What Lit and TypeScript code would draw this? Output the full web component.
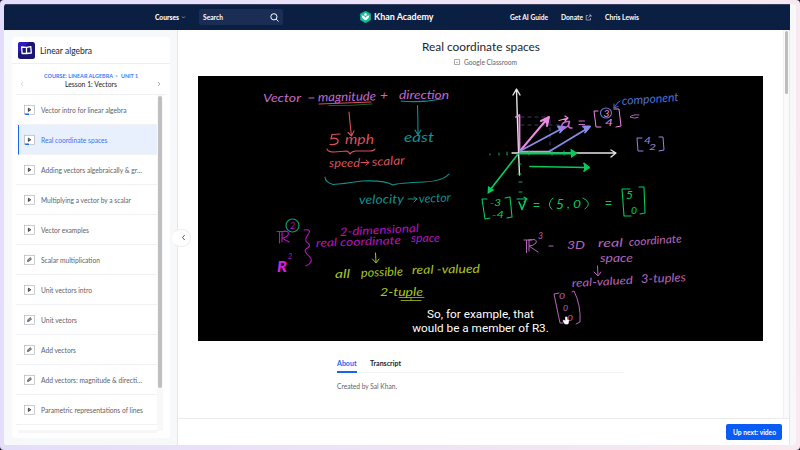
import { LitElement, html, css, svg, nothing } from "lit";
import { customElement } from "lit/decorators.js";
import { classMap } from "lit/directives/class-map.js";

type Kind = "video" | "exercise";
interface Lesson { title: string; w: number; kind: Kind; started?: boolean; active?: boolean; }

const LESSONS: Lesson[] = [
  { title: "Vector intro for linear algebra", w: 85.5, kind: "video", started: true },
  { title: "Real coordinate spaces", w: 66.5, kind: "video", started: true, active: true },
  { title: "Adding vectors algebraically & gr…", w: 101, kind: "video" },
  { title: "Multiplying a vector by a scalar", w: 90, kind: "video" },
  { title: "Vector examples", w: 48, kind: "video" },
  { title: "Scalar multiplication", w: 59, kind: "exercise" },
  { title: "Unit vectors intro", w: 51, kind: "video" },
  { title: "Unit vectors", w: 36, kind: "exercise" },
  { title: "Add vectors", w: 35, kind: "exercise" },
  { title: "Add vectors: magnitude & directi…", w: 101, kind: "exercise" },
  { title: "Parametric representations of lines", w: 102, kind: "video" },
];

// One line of UI text whose advance is fixed, with the baseline at 9 in a 12px box.
const line = (t: string, w: number, size: number, cls = "") => html`
  <svg class="line ${cls}" width=${w} height="12" viewBox="0 0 ${w} 12">
    <text x="0" y="9" font-size=${size} textLength=${w} lengthAdjust="spacingAndGlyphs">${t}</text>
  </svg>`;

// Chalk text on the board: x, baseline, width, size, colour, angle.
const ink = (t: string, x: number, y: number, w: number, s: number, c: string, a = 0, weight = 400) => svg`
  <text x=${x} y=${y} font-size=${s} fill=${c} font-weight=${weight} textLength=${w}
    lengthAdjust="spacingAndGlyphs" transform="rotate(${a} ${x} ${y})">${t}</text>`;
const stroke = (d: string, c: string, w = 1, dash = "") => svg`
  <path d=${d} stroke=${c} stroke-width=${w} stroke-dasharray=${dash || nothing} fill="none"
    stroke-linecap="round" stroke-linejoin="round"></path>`;

@customElement("lesson-icon")
class LessonIcon extends LitElement {
  static properties = { kind: {}, started: { type: Boolean } };
  declare kind: Kind;
  declare started: boolean;
  static styles = css`:host { display: block; width: 11px; height: 12px; } svg { display: block; }`;
  render() {
    return html`<svg width="11" height="12" viewBox="0 0 11 12">
      <rect x=".5" y="1.300" width="9.900" height="9" fill="#fff" stroke="#b4b6ba" stroke-width=".7"/>
      ${this.kind === "video"
        ? svg`<path d="M4.400 4.200V7.400L6.800 5.800Z" fill="#aaa" stroke="#333" stroke-width=".9" stroke-linejoin="round"/>`
        : svg`<path d="M3.500 7.500 4 5.700 6.100 3.600 7.500 4.900 5.400 7Z" fill="#999" stroke="#444" stroke-width=".8" stroke-linejoin="round"/>`}
      ${this.started ? svg`<path d="M.600 9.600H5V11H1.600Z" fill="#1865f2"/>` : nothing}
    </svg>`;
  }
}

@customElement("chalk-board")
class ChalkBoard extends LitElement {
  static styles = css`
    :host { display: block; position: relative; width: 565px; height: 265px; background: #000; overflow: hidden; }
    svg { display: block; font-family: Lato, sans-serif; font-style: italic; }
    .caption { position: absolute; left: 212.500px; top: 232.500px; width: 140px; text-align: center; color: #fff;
      font: 400 11.75px/13.6px Roboto, sans-serif; white-space: nowrap; }
    .caption div { height: 13.6px; }
  `;
  render() {
    const pk = "#c56ad0", rd = "#d9505a", te = "#12908f", gr = "#07c95e", vi = "#8a8ae8", mg = "#b414bd", ye = "#a9c522", lp = "#b765bd", bl = "#4d6fd0", wh = "#e6e6e6", rose = "#ea8ae0";
    return html`<svg width="565" height="265" viewBox="198 76 565 265">
      ${ink("Vector", 263, 102, 38, 12, pk)}${stroke("M309 98h5", pk)}
      ${ink("magnitude", 318, 101.5, 58, 12.5, pk, -1)}${ink("+", 380, 98.5, 8, 11, pk)}${ink("direction", 399, 99, 50, 12, pk)}
      ${stroke("M319 104Q345 103 371 102", rd, 1.1)}${stroke("M329 105.5Q350 106 372 104", "#11833b", .8)}
      ${stroke("M401 101Q420 103 442 99", te, 1.1)}
      ${stroke("M349 112Q350 124 351.500 136M348 132.500L351.500 136 354 131", rd, 1.1)}
      ${stroke("M417.500 105.500Q418 120 418 134M415 130L418 135 421 130", te, 1.1)}
      ${stroke("M340 134L332 134.500 331 139Q336 137 338 140Q339 145 330 144.500", rd, 1.2)}${ink("mph", 345, 143.500, 29, 14, rd)}${ink("east", 404, 142, 30, 13, te)}
      ${stroke("M327 149Q328 152 334 152L347 151Q349 152 350 154Q352 151 356 151L370 151Q374 151 375 149", rd, 1.1)}
      ${ink("speed", 329, 167, 31, 12, rd)}${stroke("M361 162.500h8M366 160l3 2.500-3 2.500", rd)}${ink("scalar", 372, 166, 33, 12, rd, -3)}
      ${stroke("M325 177Q325 182 333 184.500Q342 184 362 181Q385 180 393 185Q398 183 424 182Q443 181 449 174", te, 1.1)}
      ${ink("velocity", 359, 204, 45, 12.5, te, -1)}${stroke("M408 199h9M414 197l3 2-3 3", te)}${ink("vector", 419, 203, 32, 12, te, -3)}

      ${stroke("M519.500 175Q518 140 516.500 90M513 95L516.500 89 520 95", wh, 1.4)}
      ${stroke("M512 153H615M611 150L616 153 611 157", wh, 1.3)}
      ${stroke("M519.500 151V116M516 117L519.500 115", rose, 1.8)}
      ${stroke("M521 117H546M521 125H563M550 121V151", "#53538f", .7, "3 4")}
      ${stroke("M521 151.500H550", rose, 1.5)}
      ${stroke("M520 151L547 119M541 121L549 117 547 126", rose, 2)}
      ${stroke("M520 151L563 128M558 126.500L565 127 560 132.500", vi, 1.8)}
      ${stroke("M550 151L588 128M583 126.500L590 126.500 585 132.500", vi, 1.8)}
      <path d="M542.500 119.500 549.500 116.500 547.500 125.500Z" fill=${rose}/>
      <path d="M557.500 127 565.500 127 560.500 132.500ZM583 127 591 126.500 586 132.500Z" fill=${vi}/>
      ${stroke("M520 153.300H575", gr, 2.2)}
      ${stroke("M530 166.500L587 167.500M584 163.500L589 167.500 584 171", gr, 1.7)}
      ${stroke("M518 154L490 190", gr, 1.7)}
      <path d="M570.500 148.500 578 153.300 571 158ZM488 186 487.500 194 494.500 190ZM584 163.500 590 167.500 584 171Z" fill=${gr}/>
      ${stroke("M490 154v1M499 153v2M507 152v3M529 151v4M552 151v4M564 151v4M518 164h3M518 174h3M519 182h3M519 192h3", gr, .9)}
      ${stroke("M569 121.500Q562 121 561.500 127Q562 131 568 126L569.500 121.500Q567 129 572 128", pk, 1.5)}${stroke("M559 120.500L568 118M565 116L568 118 565 121", rose, 1.2)}
      ${stroke("M579 121h5.500M579 124.500h5.500", pk, 1)}${ink("3", 603.500, 117, 6, 9, rose)}${ink("4", 605, 125.500, 8, 9, rose)}
      ${stroke("M598 111L594 111 596 127 601 127M614 109L619 109 621 126 616 127", rose, 1)}
      ${stroke("M600.500 113a5.500 5 0 1 1 11 0a5.500 5 0 1 1 -11 0", "#5d83d6", 1.1)}
      ${stroke("M620 101Q617 102 614 108M614 104V108L618 106.500", bl, 1)}
      ${ink("component", 622, 105, 57, 12, bl, -4)}
      ${stroke("M639 115Q633 114 630 117Q635 119 638 117.500", pk, .9)}
      ${stroke("M642 138L637 138 638 151 643 151M659 137L663 137 664 150 659 151", vi, 1)}
      ${ink("4", 644, 143.500, 7, 9, vi)}${ink("2", 649, 150, 7, 8, vi)}
      ${stroke("M487 199L482 199 485 219 490 218M505 198L510 197 512 217 507 218", gr, 1.1)}
      ${ink("-3", 490, 206, 11, 9.5, gr)}${ink("-4", 492, 218, 12, 9.5, gr)}
      ${stroke("M519 202Q521 206 522 209.500L525.500 201", gr, 1.6)}${stroke("M517 199H527M524 197L527 199 524 202", gr, 1.1)}
      ${stroke("M534 203.500h5M534 206.500h5M606 201.500h5M606 204.500h5", gr, 1)}
      ${stroke("M553 198Q546 204 552 209.500M583 198Q593 203 585 209", gr, 1)}
      ${ink("5", 556, 208.500, 8, 13, gr)}${ink(",", 567, 208, 3, 12, gr)}${ink("0", 573, 208, 8, 11, gr)}
      ${stroke("M630 189L622 189 624 216 631 216M639 187L644 187 645 213 640 214", gr, 1.1)}
      ${ink("5", 626, 198.5, 7, 12, gr)}${ink("0", 631, 213.5, 6, 9, gr)}

      ${stroke("M277 231.500H285M279.500 232V243M282 232V242M282 231.500Q290 230 288 235Q286 238 282 238L289 242", mg, 1.1)}${ink("2", 290, 229, 5, 9, mg)}
      ${stroke("M286 225.500a6.500 6.500 0 1 1 13 0a6.500 6.500 0 1 1 -13 0", "#149b6c", 1.2)}
      ${ink("R", 277, 272, 10, 15, "#d322dd", 0, 900)}${ink("2", 288, 259, 4, 8, mg)}
      ${stroke("M304 230Q311 229 309 233Q303 241 308 243Q312 246 306 249Q303 251 310 257Q314 262 306 266", mg, 1.1)}
      ${ink("2-dimensional", 340, 236, 79, 11.500, mg, -3)}
      ${ink("real coordinate", 316, 247, 85, 11.500, mg, -2)}${ink("space", 411, 242, 29, 11.500, mg)}
      ${stroke("M375.500 253L376 262M372.500 259L376 263 379 259", ye, 1)}
      ${ink("all", 335, 278, 15, 12, ye)}${ink("possible", 361, 277, 42, 12, ye, -2)}${ink("real -valued", 412, 274, 68, 12, ye, -1)}
      ${ink("2-tuple", 380, 296, 43, 11.500, ye)}${stroke("M399 297.500H424M401 300.500H421M411 298v2", ye, .8)}

      ${stroke("M524 240H532M526.500 240.500V252.500M529 240V251M529 240Q538 238 536 243Q533 246 529 246L538 252", lp, 1)}${ink("3", 538, 239, 5, 9, lp)}${stroke("M549 246h4", lp)}
      ${ink("3D", 567, 249, 18, 12, lp)}${ink("real", 598, 247, 25, 11.5, lp, -1)}${ink("coordinate", 629, 246, 53, 11, lp, -4)}
      ${ink("space", 600, 262, 33, 11.500, lp)}${stroke("M597.500 266L598 275M594 272L598 276 601 272", lp)}
      ${ink("real-valued", 572, 287, 61, 11, lp, -3)}${ink("3-tuples", 641, 283, 45, 12, lp, -2)}
      ${stroke("M559 293L554 294 560 323 563 323M572 292L574 291Q581 305 580 322L576 324", lp, 1)}
      ${ink("0", 559, 299, 6, 7, lp)}${ink("0", 563, 311, 5, 7, lp)}${ink("0", 567, 321, 6, 7, lp)}
      <path d="M565.500 317V321L563.500 320 563 321 565 324H568L569 320.500 567 319.500V317Z" fill="#fff" stroke="#fff" stroke-width=".6"/>
    </svg>
    <div class="caption"><div>So, for example, that</div><div>would be a member of R3.</div></div>`;
  }
}

@customElement("app-root")
class AppRoot extends LitElement {
  static styles = css`
    :host { display: block; width: 800px; height: 450px; overflow: hidden; background: #201d30; font-family: Lato, sans-serif; color: #21242c; }
    * { box-sizing: border-box; }
    .frame { height: 450px; padding: 4px 4px 5px; border-radius: 4px; background: linear-gradient(100deg, #e3dcfb 0%, #ece3f8 45%, #fae9ee 100%); }
    .window { height: 441px; border-radius: 3px; background: #f8f8fa; overflow: hidden; }
    .page { width: 785.500px; height: 441px; display: flex; flex-direction: column; background: #fff; border-right: 1px solid #e7e7eb; }
    .line { display: block; overflow: visible; fill: currentColor; flex: none; }
    .bold { font-weight: 700; } .black { font-weight: 900; }
    .nav { height: 25.700px; flex: none; background: #0b1f42; color: #fff; display: grid; grid-template-columns: 327px 1fr auto; align-items: center; padding: 0 151px 0 0; width: 785.700px; border-top: 1px solid #37405f; }
    .nav > div { display: flex; align-items: center; }
    .left { padding-left: 151px; }
    .chev { margin: 1px 13px 0 2px; }
    .search { width: 84px; height: 16px; border-radius: 2px; background: #1a2d54; display: flex; align-items: center; justify-content: space-between; padding: 0 4.500px 0 4px; }
    .brand { padding-left: 29px; gap: 3px; }
    .links { gap: 13px; }
    .donate { display: flex; align-items: center; gap: 2px; }
    .body { flex: 1; display: flex; min-height: 0; }
    .side { width: 173.500px; flex: none; background: #f7f8fa; border-right: 1px solid #e4e5e9; padding: 7.300px 7px 0 8px; }
    .card { height: 401px; width: 158px; background: #fff; border-radius: 4px; overflow: hidden; }
    .course { height: 27px; display: flex; align-items: center; gap: 4.500px; padding: 1px 0 0 6px; border-bottom: 1px solid #efeff1; }
    .course .line { margin-top: 1px; }
    .unit { height: 31px; display: grid; grid-template-columns: 12px 1fr 12px; align-items: end; padding: 0 0 4px; border-bottom: 1px solid #f0f0f2; margin: 0 4px; }
    .titles { display: flex; flex-direction: column; align-items: center; padding-right: 1px; }
    .crumb { display: flex; gap: 2.500px; color: #4479f2; margin-bottom: -2.700px; }
    .scroll { display: flex; height: 336px; margin: 0 7px 0 4px; }
    .list { width: 141px; flex: none; }
    .row { height: 30px; display: flex; align-items: center; gap: 5.500px; padding: 1px 0 0 8px; border-bottom: 1px solid #f1f1f3; color: #606268; }
    .row .line { margin-top: 1px; }
    .row.on { background: #e8effd; color: #3c76f1; border-left: 1.500px solid #1865f2; margin-left: 2px; padding-left: 5px; }
    .foot { height: 3px; background: #f6f6f8; margin: 5px 0 0 2px; }
    .track { width: 6px; background: #f8f8f9; padding: 1px 1px; }
    .thumb { width: 4px; height: 292px; background: #bfbfbf; border-radius: 2px; }
    .main { flex: 1; display: flex; flex-direction: column; position: relative; min-width: 0; }
    .content { flex: 1; display: flex; }
    .col { width: 602px; flex: none; padding-left: 20.500px; }
    .head { height: 46.300px; display: flex; flex-direction: column; align-items: center; width: 565px; padding-top: 12.500px; }
    .gc { display: flex; align-items: center; gap: 4px; color: #62646a; margin-top: 1.500px; padding-left: 9px; }
    .tabs { margin: 16.500px 0 0 139px; width: 287px; height: 16px; display: flex; gap: 13.500px; border-bottom: 1.500px solid #f2f3f5; }
    .tab.on { color: #1865f2; border-bottom: 2px solid #1865f2; height: 16px; }
    .about { margin: 6.500px 0 0 139px; color: #5f6168; }
    .vbar { margin-left: auto; width: 6px; padding: 1.500px 1px 0 1.500px; background: #fafafb; border-left: 1px solid #f1f1f3; }
    .vthumb { width: 3px; height: 63px; background: #bdbdbd; border-radius: 2px; }
    .bottom { height: 27px; flex: none; border-top: 1px solid #ececef; display: flex; justify-content: flex-end; padding: 5px 6.500px 0 0; }
    .next { width: 56px; height: 16px; border-radius: 2px; background: #0b5cf4; color: #fff; display: flex; align-items: center; justify-content: center; }
    .collapse { position: absolute; left: -5.500px; top: 199px; width: 19px; height: 18px; border-radius: 9px; border: 1px solid #ededf0; background: #fff; border-left-color: transparent; display: flex; align-items: center; justify-content: center; padding-left: 3px; }
  `;
  render() {
    return html`<div class="frame"><div class="window"><div class="page">
      <header class="nav">
        <div class="left">${line("Courses", 24, 7.4, "black")}
          <svg class="chev" width="5" height="5" viewBox="0 0 5 5"><path d="M1 1.500 2.500 3 4 1.500" fill="none" stroke="#9aa4ba" stroke-width=".8"/></svg>
          <div class="search">${line("Search", 20, 7.4, "bold")}
            <svg width="9" height="9" viewBox="0 0 9 9"><path d="M7 3.800a3.100 3.100 0 1 1-6.200 0a3.100 3.100 0 1 1 6.200 0M6.200 6.100 8.500 8.500" fill="none" stroke="#fff" stroke-width="1"/></svg></div>
        </div>
        <div class="brand">
          <svg width="11" height="12" viewBox="0 0 11 12"><path d="M5.500.2 10.500 2.800V9L5.500 11.800.5 9V2.800Z" fill="#14bf96" stroke="#14bf96" stroke-linejoin="round" stroke-width=".6"/><circle cx="5.500" cy="3.500" r="1.300" fill="#fff"/><path d="M1.600 4.300Q4.700 4.500 5.500 6.800 6.300 4.500 9.400 4.300 9.300 7.400 6.500 8.800L5.500 9.200 4.500 8.800Q1.700 7.400 1.600 4.300" fill="#fff"/></svg>
          ${line("Khan Academy", 59.5, 9.6, "bold")}
        </div>
        <div class="links">${line("Get AI Guide", 38, 7.5, "bold")}
          <span class="donate">${line("Donate", 22, 7.5, "bold")}<svg width="7" height="7" viewBox="0 0 7 7"><path d="M3 1.500H1.200V6H5.500V4M4 1H6V3M6 1 3.300 3.700" fill="none" stroke="#bac3d6" stroke-width=".7"/></svg></span>
          ${line("Chris Lewis", 34, 7.5, "bold")}</div>
      </header>
      <div class="body">
        <aside class="side"><div class="card">
          <div class="course">
            <svg width="17" height="17" viewBox="0 0 17 17"><rect width="17" height="17" rx="2.500" fill="#1b1572"/><path d="M0 11V2.500Q0 0 2.500 0H11Z" fill="#2c1cc0"/><path d="M3.600 5 8.500 5.300 12.800 4.600 13.300 11 8.700 11.500 4.100 11.500ZM8.500 5.300V11.400" fill="none" stroke="#fff" stroke-width="1.300" stroke-linejoin="round"/></svg>
            ${line("Linear algebra", 52, 8.5)}
          </div>
          <div class="unit">
            <svg width="12" height="10" viewBox="0 0 12 10"><path d="M7 2 5.200 3.900 7 5.800" fill="none" stroke="#ccc" stroke-width=".8"/></svg>
            <div class="titles"><div class="crumb">${line("COURSE: LINEAR ALGEBRA", 69, 5.1, "bold")}${line(">", 3, 5.1)}${line("UNIT 1", 17, 5.1, "bold")}</div>${line("Lesson 1: Vectors", 52, 6.9)}</div>
            <svg width="12" height="10" viewBox="0 0 12 10"><path d="M4 2 5.800 3.900 4 5.800" fill="none" stroke="#888" stroke-width=".8"/></svg>
          </div>
          <div class="scroll"><div class="list">
            ${LESSONS.map((l) => html`<div class=${classMap({ row: true, on: !!l.active })}><lesson-icon .kind=${l.kind} .started=${!!l.started}></lesson-icon>${line(l.title, l.w, 7)}</div>`)}
            <div class="foot"></div></div>
            <div class="track"><div class="thumb"></div></div>
          </div>
        </div></aside>
        <main class="main">
          <div class="content"><div class="col">
            <div class="head">${line("Real coordinate spaces", 118, 11.5)}
              <div class="gc"><svg width="6" height="6" viewBox="0 0 6 6"><path d="M.5.5H5.500V5.500H.5ZM2 3.300H4" fill="none" stroke="#888" stroke-width=".7"/></svg>${line("Google Classroom", 53, 6.7)}</div></div>
            <chalk-board></chalk-board>
            <div class="tabs"><div class="tab on">${line("About", 19.5, 7, "bold")}</div><div class="tab">${line("Transcript", 31, 7, "bold")}</div></div>
            <div class="about">${line("Created by Sal Khan.", 60, 6.6)}</div>
          </div><div class="vbar"><div class="vthumb"></div></div></div>
          <div class="bottom"><div class="next">${line("Up next: video", 43, 7.2, "bold")}</div></div>
          <div class="collapse"><svg width="5" height="7" viewBox="0 0 5 7"><path d="M3.700 1 1.500 3.500 3.700 6" fill="none" stroke="#555" stroke-width="1"/></svg></div>
        </main>
      </div>
    </div></div></div>`;
  }
}
